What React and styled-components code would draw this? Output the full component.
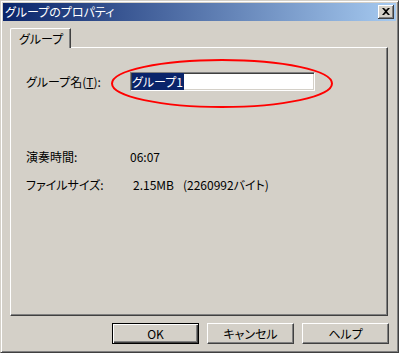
import React from "react";
import styled, { createGlobalStyle } from "styled-components";

const GlobalStyle = createGlobalStyle`
    body {
        margin: 0;
        background: #d4d0c8;
    }
`;

const FONT = `"Noto Sans CJK JP", "Liberation Sans", sans-serif`;

const Window = styled.div`
    position: relative;
    width: 399px;
    height: 353px;
    box-sizing: border-box;
    display: flex;
    flex-direction: column;
    background: #d4d0c8;
    border: 1px solid;
    border-color: #d4d0c8 #404040 #404040 #d4d0c8;
    box-shadow: inset 1px 1px 0 #ffffff, inset -1px -1px 0 #808080;
    padding: 2px;
    font-family: ${FONT};
    font-feature-settings: "palt";
    font-size: 12px;
    color: #000;
`;

const TitleBar = styled.div`
    height: 18px;
    display: flex;
    align-items: center;
    justify-content: space-between;
    padding-left: 2px;
    background: linear-gradient(90deg, #0a246a 0%, #a6caf0 100%);
    color: #ffffff;
    font-size: 12px;
    line-height: 18px;
`;

const CloseButton = styled.div`
    width: 16px;
    height: 14px;
    box-sizing: border-box;
    margin-right: 2px;
    display: flex;
    align-items: center;
    justify-content: center;
    background: #d4d0c8;
    border-right: 1px solid #404040;
    border-bottom: 1px solid #404040;
    box-shadow: inset 1px 1px 0 #ffffff, inset -1px -1px 0 #808080;
`;

const Content = styled.div`
    flex: 1;
    display: flex;
    flex-direction: column;
    padding: 7px 7px 6px 7px;
`;

const TabStrip = styled.div`
    display: flex;
    height: 19px;
`;

const Tab = styled.div`
    position: relative;
    z-index: 1;
    height: 20px;
    box-sizing: border-box;
    padding: 0 7px 0 8px;
    line-height: 19px;
    white-space: nowrap;
    background: #d4d0c8;
    border-top: 1px solid #ffffff;
    border-left: 1px solid #ffffff;
    border-right: 1px solid #404040;
    border-top-left-radius: 2px;
    box-shadow: inset -1px 0 0 #808080;
`;

const Panel = styled.div`
    height: 269px;
    box-sizing: border-box;
    margin-right: 1px;
    border-top: 1px solid #ffffff;
    border-left: 1px solid #ffffff;
    border-right: 1px solid #404040;
    border-bottom: 1px solid #404040;
    box-shadow: inset -1px -1px 0 #808080;
    padding: 24px 0 0 15px;
`;

const FieldRow = styled.div`
    display: flex;
    align-items: center;
    height: 19px;
`;

const Label = styled.div`
    width: 104px;
    line-height: 16px;
    white-space: nowrap;
`;

const TextBox = styled.div`
    width: 185px;
    height: 19px;
    box-sizing: border-box;
    background: #ffffff;
    border-top: 1px solid #808080;
    border-left: 1px solid #808080;
    border-right: 1px solid #ffffff;
    border-bottom: 1px solid #ffffff;
    box-shadow: inset 1px 1px 0 #404040, inset -1px -1px 0 #d4d0c8;
    padding: 2px 0 0 1px;
    line-height: 14px;
`;

const Selected = styled.span`
    background: #0a246a;
    color: #ffffff;
    padding: 0 1px 0 0;
`;

const InfoList = styled.div`
    display: flex;
    flex-direction: column;
    gap: 12px;
    margin-top: 58px;
`;

const InfoRow = styled.div`
    display: flex;
    height: 16px;
    line-height: 16px;
    white-space: nowrap;
`;

const Value = styled.span`
    margin-left: ${(p) => p.$indent || 0}px;
`;

const ButtonRow = styled.div`
    display: flex;
    justify-content: flex-end;
    gap: 8px;
    margin-top: 7px;
`;

const Button = styled.div`
    width: 87px;
    height: 21px;
    box-sizing: border-box;
    display: flex;
    align-items: center;
    justify-content: center;
    background: #d4d0c8;
    border: 1px solid;
    border-color: ${(p) =>
        p.$default ? "#000" : "#ffffff #404040 #404040 #ffffff"};
    box-shadow: ${(p) =>
        p.$default
            ? "inset 1px 1px 0 #ffffff, inset -1px -1px 0 #404040, inset -2px -2px 0 #808080"
            : "inset -1px -1px 0 #808080"};
`;

const Annotation = styled.svg`
    position: absolute;
    left: 110px;
    top: 58px;
    pointer-events: none;
`;

function App() {
    return (
        <>
            <GlobalStyle />
            <Window>
                <TitleBar>
                    <span>グループのプロパティ</span>
                    <CloseButton>
                        <svg width="8" height="7" viewBox="0 0 8 7">
                            <path
                                d="M0 0h2l2 2 2-2h2L5 3.5 8 7H6L4 5 2 7H0l3-3.5z"
                                fill="#000"
                            />
                        </svg>
                    </CloseButton>
                </TitleBar>
                <Content>
                    <TabStrip>
                        <Tab>グループ</Tab>
                    </TabStrip>
                    <Panel>
                        <FieldRow>
                            <Label>
                                グループ名(<u>T</u>):
                            </Label>
                            <TextBox>
                                <Selected>グループ1</Selected>
                            </TextBox>
                        </FieldRow>
                        <InfoList>
                            <InfoRow>
                                <Label>演奏時間:</Label>
                                <Value>06:07</Value>
                            </InfoRow>
                            <InfoRow>
                                <Label>ファイルサイズ:</Label>
                                <Value $indent={3}>2.15MB</Value>
                                <Value $indent={9}>(2260992バイト)</Value>
                            </InfoRow>
                        </InfoList>
                    </Panel>
                    <ButtonRow>
                        <Button $default>OK</Button>
                        <Button>キャンセル</Button>
                        <Button>ヘルプ</Button>
                    </ButtonRow>
                </Content>
                <Annotation width="222" height="49" viewBox="0 0 222 49">
                    <ellipse
                        cx="111"
                        cy="24.5"
                        rx="110"
                        ry="23.5"
                        fill="none"
                        stroke="#ff0000"
                        strokeWidth="2"
                    />
                </Annotation>
            </Window>
        </>
    );
}

export default App;
